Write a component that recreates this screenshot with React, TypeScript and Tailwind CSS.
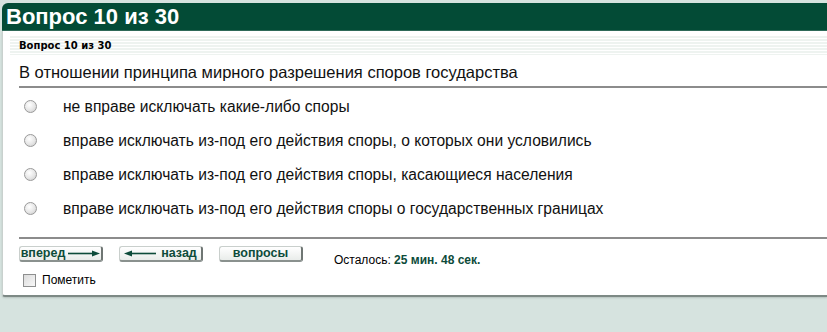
import React from "react";

const Radio = () => (
  <span className="block w-[13px] h-[13px] rounded-full border border-[#9a9a9a] bg-[radial-gradient(circle_at_40%_35%,#ffffff_0%,#e6e6e6_55%,#c8c8c8_100%)]" />
);

const Btn = ({ children }: { children: React.ReactNode }) => (
  <div className="w-[84px] h-[16px] flex items-center justify-center gap-[3px] rounded-[3px] border border-[#c9cfcc] border-r-[2px] border-b-[2px] border-r-[#6f7673] border-b-[#8a918e] bg-[linear-gradient(#ffffff,#e9ecea)] text-[#0d4b3a] text-[12.5px] font-bold leading-none">
    {children}
  </div>
);

const ArrowRight = () => (
  <svg width="32" height="7" viewBox="0 0 32 7">
    <line x1="0" y1="3.5" x2="25" y2="3.5" stroke="#0d4b3a" strokeWidth="1.6" />
    <polygon points="24,0.5 32,3.5 24,6.5" fill="#0d4b3a" />
  </svg>
);

const ArrowLeft = () => (
  <svg width="32" height="7" viewBox="0 0 32 7">
    <line x1="7" y1="3.5" x2="32" y2="3.5" stroke="#0d4b3a" strokeWidth="1.6" />
    <polygon points="8,0.5 0,3.5 8,6.5" fill="#0d4b3a" />
  </svg>
);

const options = [
  "не вправе исключать какие-либо споры",
  "вправе исключать из-под его действия споры, о которых они условились",
  "вправе исключать из-под его действия споры, касающиеся населения",
  "вправе исключать из-под его действия споры о государственных границах",
];

export default function App() {
  return (
    <div className="w-[827px] h-[332px] overflow-hidden bg-[#d6e3df] pt-[3px] font-['Liberation_Sans',Arial,sans-serif]">
      <div className="ml-[2px] h-[28px] bg-[#034b36] rounded-tl-[6px] border-b border-[#2f6a59] text-white text-[22px] font-bold leading-[27px] pl-[4px]">
        Вопрос 10 из 30
      </div>
      <div className="ml-[2px] h-[266px] bg-white border-l border-[#c9d1ce] border-b-[2px] border-b-[#7d8985] rounded-bl-[3px] shadow-[0_1px_2px_rgba(0,0,0,0.15)] flex flex-col">
        <div className="mt-[4px] ml-[7px] h-[20px] pl-[9px] flex items-center bg-[repeating-linear-gradient(#ffffff_0px,#ffffff_1px,#eef3f0_1px,#eef3f0_3px)] text-[10px] font-bold font-['DejaVu_Sans',Verdana,sans-serif] text-black">
          Вопрос 10 из 30
        </div>
        <div className="ml-[16px] h-[33px] flex items-center border-b-[2px] border-[#8c8c8c] text-[16.5px] text-[#111] pt-[3px]">
          В отношении принципа мирного разрешения споров государства
        </div>
        <div className="ml-[16px] flex flex-col pt-[1px] h-[151px] border-b-[2px] border-[#8c8c8c]">
          {options.map((o) => (
            <div key={o} className="h-[34px] flex items-center pt-[1px]">
              <div className="w-[44px] pl-[5px] flex items-center">
                <Radio />
              </div>
              <span className="text-[15.6px] text-[#111]">{o}</span>
            </div>
          ))}
        </div>
        <div className="ml-[16px] mt-[7px] flex items-start h-[16px]">
          <Btn>
            <span>вперед</span>
            <ArrowRight />
          </Btn>
          <div className="ml-[16px]">
            <Btn>
              <ArrowLeft />
              <span className="ml-[2px]">назад</span>
            </Btn>
          </div>
          <div className="ml-[16px]">
            <Btn>
              <span>вопросы</span>
            </Btn>
          </div>
          <div className="ml-[31px] mt-[5px] text-[12px] text-black">
            Осталось: <span className="font-bold text-[#0d4b3a]">25 мин. 48 сек.</span>
          </div>
        </div>
        <div className="ml-[20px] mt-[10px] flex items-center h-[16px]">
          <span className="block w-[13px] h-[13px] border border-[#8e8f8f] bg-[linear-gradient(135deg,#dcdcdc,#f8f8f8)]" />
          <span className="ml-[6px] text-[12px] text-black">Пометить</span>
        </div>
      </div>
    </div>
  );
}
